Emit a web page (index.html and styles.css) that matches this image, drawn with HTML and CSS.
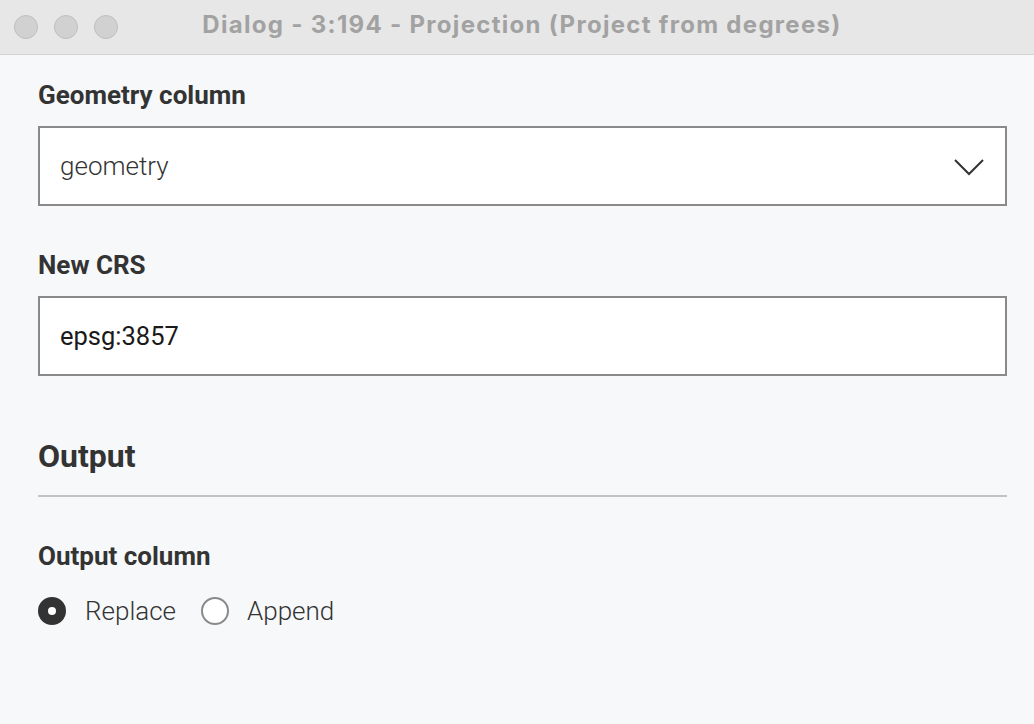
FILE: index.html
```html
<!DOCTYPE html>
<html>
<head>
<meta charset="utf-8">
<link rel="stylesheet" href="styles.css">
</head>
<body>
<div class="window">
  <div class="titlebar">
    <div class="lights">
      <span class="light"></span><span class="light"></span><span class="light"></span>
    </div>
    <div class="title">Dialog - 3:194 - Projection (Project from degrees)</div>
  </div>
  <div class="content">
    <div class="label first">Geometry column</div>
    <div class="field select">
      <span class="value light-text">geometry</span>
      <svg class="chevron" width="32" height="18" viewBox="0 0 32 18"><path d="M2 2 L16 16 L30 2" fill="none" stroke="#333" stroke-width="2"/></svg>
    </div>
    <div class="label gap">New CRS</div>
    <div class="field input">
      <span class="value">epsg:3857</span>
    </div>
    <div class="heading">Output</div>
    <div class="divider"></div>
    <div class="label gap">Output column</div>
    <div class="radios">
      <span class="radio checked"></span><span class="radio-label">Replace</span>
      <span class="radio"></span><span class="radio-label">Append</span>
    </div>
  </div>
</div>
</body>
</html>
```
FILE: styles.css
```css
html, body {
  margin: 0;
  padding: 0;
  background: #f7f8fa;
  font-family: Roboto, "Liberation Sans", sans-serif;
}
.window {
  width: 1034px;
  height: 724px;
  overflow: hidden;
}
.titlebar {
  height: 54px;
  background: #e7e7e7;
  border-bottom: 1px solid #d2d2d2;
  display: flex;
  align-items: center;
  position: relative;
}
.lights {
  display: flex;
  gap: 16px;
  padding-left: 14px;
}
.light {
  width: 22px;
  height: 22px;
  border-radius: 50%;
  background: #d1d1d1;
  border: 1px solid #bfbfbf;
}
.title {
  position: absolute;
  left: 0;
  right: 0;
  text-align: center;
  font-family: Inter, Roboto, sans-serif;
  font-size: 24px;
  line-height: 30px;
  font-weight: 700;
  letter-spacing: 1.3px;
  color: #a2a2a2;
  top: 10px;
  padding-left: 10px;
}
.content {
  padding: 0 27px 0 38px;
}
.label {
  font-size: 26px;
  font-weight: 700;
  line-height: 28px;
  color: #333;
}
.label.first { margin-top: 26px; }
.label.gap { margin-top: 45px; }
.field {
  margin-top: 17px;
  height: 76px;
  border: 2px solid #8a8a8a;
  background: #fff;
  display: flex;
  align-items: center;
  padding: 0 20px 0 20px;
}
.value {
  font-size: 25.5px;
  color: #1a1a1a;
}
.light-text {
  font-size: 26px;
  font-weight: 300;
  color: #333;
}
.select { justify-content: space-between; }
.chevron { margin-top: 2px; }
.heading {
  margin-top: 62px;
  font-size: 32px;
  font-weight: 700;
  line-height: 36px;
  color: #333;
}
.divider {
  margin-top: 21px;
  height: 2px;
  background: #c3c3c6;
}
.radios {
  margin-top: 26px;
  height: 30px;
  display: flex;
  align-items: center;
}
.radio {
  width: 28px;
  height: 28px;
  border-radius: 50%;
  border: 2px solid #8a8a8a;
  background: #fff;
  box-sizing: border-box;
  margin-right: 19px;
}
.radio.checked {
  background: #333;
  border-color: #333;
  position: relative;
}
.radio.checked::after {
  content: "";
  position: absolute;
  left: 8px;
  top: 8px;
  width: 8px;
  height: 8px;
  border-radius: 50%;
  background: #fff;
}
.radio-label {
  font-size: 26px;
  font-weight: 300;
  color: #333;
  margin-right: 25px;
}
.radio-label + .radio { margin-right: 18px; }
```
